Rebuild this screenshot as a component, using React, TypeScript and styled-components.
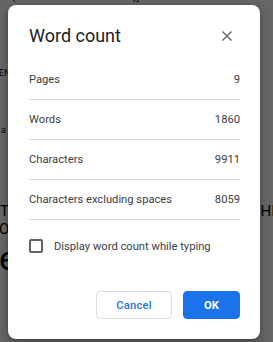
import styled, { createGlobalStyle } from 'styled-components';

const GlobalStyle = createGlobalStyle`
  html, body {
    margin: 0;
    padding: 0;
    background: #ffffff;
  }
  body {
    font-family: Roboto, "Liberation Sans", Arial, sans-serif;
  }
`;

const Page = styled.div`
  position: relative;
  width: 273px;
  height: 342px;
  overflow: hidden;
  background: #ffffff;
`;

// the document behind the dimmed backdrop, only its edges show
const Doc = styled.div`
  display: flex;
  flex-direction: column;
  color: #000000;
  font-family: Roboto, "Liberation Sans", Arial, sans-serif;
`;

const DocLine = styled.div<{ $size: number; $top: number; $indent: number }>`
  display: flex;
  justify-content: space-between;
  white-space: nowrap;
  font-size: ${(p) => p.$size}px;
  line-height: 1.2;
  margin-top: ${(p) => p.$top}px;
  margin-left: ${(p) => p.$indent}px;
`;

const DocRight = styled.span`
  margin-right: -12px;
`;

const Backdrop = styled.div`
  position: absolute;
  inset: 0;
  background: rgba(0, 0, 0, 0.6);
`;

const Dialog = styled.div`
  position: absolute;
  left: 8px;
  top: 5px;
  width: 252px;
  height: 334px;
  box-sizing: border-box;
  padding: 19px 20px 20px 21px;
  background: #ffffff;
  border-radius: 8px;
  box-shadow: 0 4px 8px 3px rgba(0, 0, 0, 0.15), 0 1px 3px rgba(0, 0, 0, 0.3);
  display: flex;
  flex-direction: column;
`;

const Header = styled.div`
  display: flex;
  align-items: center;
  justify-content: space-between;
  height: 24px;
`;

const Title = styled.h2`
  margin: 0;
  font-family: Roboto, "Liberation Sans", Arial, sans-serif;
  font-size: 18px;
  font-weight: 400;
  line-height: 24px;
  color: #202124;
`;

const CloseButton = styled.button`
  width: 26px;
  height: 26px;
  padding: 0;
  border: none;
  background: transparent;
  display: flex;
  align-items: center;
  justify-content: center;
  color: #5f6368;
  cursor: pointer;
`;

const Stats = styled.div`
  display: flex;
  flex-direction: column;
  margin-top: 12px;
`;

const StatRow = styled.div`
  height: 39px;
  display: flex;
  align-items: center;
  justify-content: space-between;
  border-bottom: 1px solid #dadce0;
  font-size: 11.2px;
  color: #3c4043;
`;

const CheckRow = styled.label`
  display: flex;
  align-items: center;
  gap: 11px;
  margin-top: 19px;
  font-size: 11.2px;
  color: #3c4043;
  cursor: pointer;
`;

const Box = styled.span`
  width: 14px;
  height: 14px;
  box-sizing: border-box;
  border: 2px solid #5f6368;
  border-radius: 2px;
  flex-shrink: 0;
`;

const Actions = styled.div`
  margin-top: auto;
  display: flex;
  justify-content: flex-end;
  gap: 11px;
`;

const Button = styled.button<{ $primary?: boolean }>`
  height: 28px;
  padding: 0 19px;
  min-width: ${(p) => (p.$primary ? 57 : 76)}px;
  box-sizing: border-box;
  border-radius: 4px;
  border: 1px solid ${(p) => (p.$primary ? '#1a73e8' : '#dadce0')};
  background: ${(p) => (p.$primary ? '#1a73e8' : '#ffffff')};
  color: ${(p) => (p.$primary ? '#ffffff' : '#1a73e8')};
  font-family: Roboto, "Liberation Sans", Arial, sans-serif;
  font-size: 11.2px;
  font-weight: ${(p) => (p.$primary ? 700 : 500)};
  letter-spacing: 0.2px;
  cursor: pointer;
`;

const stats = [
  { label: 'Pages', value: '9' },
  { label: 'Words', value: '1860' },
  { label: 'Characters', value: '9911' },
  { label: 'Characters excluding spaces', value: '8059' },
];

const App = () => (
  <Page>
    <GlobalStyle />
    <Doc>
      <DocLine $size={10} $top={-9} $indent={12}>
        <span>(SHEETS DATA ANALYTICS)]</span>
      </DocLine>
      <DocLine $size={9} $top={65} $indent={-13}>
        <span>OPEN</span>
      </DocLine>
      <DocLine $size={9} $top={46} $indent={1}>
        <span>a</span>
      </DocLine>
      <DocLine $size={15} $top={66} $indent={0}>
        <span>TECHNOLOGY</span>
        <DocRight>GRAPHIC</DocRight>
      </DocLine>
      <DocLine $size={15} $top={0} $indent={-1}>
        <span>OF</span>
      </DocLine>
      <DocLine $size={34} $top={0} $indent={-1}>
        <span>e</span>
      </DocLine>
    </Doc>
    <Backdrop />
    <Dialog role="dialog" aria-label="Word count">
      <Header>
        <Title>Word count</Title>
        <CloseButton aria-label="Close">
          <svg width="10" height="10" viewBox="0 0 10 10">
            <path d="M0.5 0.5 L9.5 9.5 M9.5 0.5 L0.5 9.5" stroke="currentColor" strokeWidth="1.4" />
          </svg>
        </CloseButton>
      </Header>
      <Stats>
        {stats.map((s) => (
          <StatRow key={s.label}>
            <span>{s.label}</span>
            <span>{s.value}</span>
          </StatRow>
        ))}
      </Stats>
      <CheckRow>
        <Box />
        <span>Display word count while typing</span>
      </CheckRow>
      <Actions>
        <Button>Cancel</Button>
        <Button $primary>OK</Button>
      </Actions>
    </Dialog>
  </Page>
);

export default App;
